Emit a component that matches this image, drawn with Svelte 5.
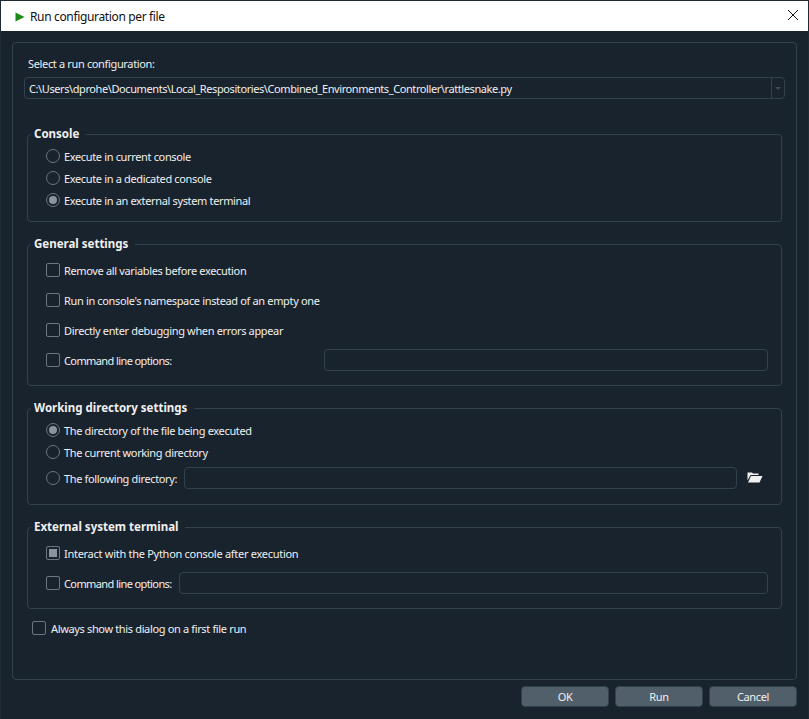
<script>
  let consoleRows = [
    { label: 'Execute in current console', on: false },
    { label: 'Execute in a dedicated console', on: false },
    { label: 'Execute in an external system terminal', on: true }
  ];
  let generalRows = [
    'Remove all variables before execution',
    "Run in console's namespace instead of an empty one",
    'Directly enter debugging when errors appear'
  ];
</script>

<div class="window">
  <header class="titlebar">
    <svg class="play" width="10" height="10" viewBox="0 0 10 10"><path d="M0.5 0.5 L9.5 5 L0.5 9.5 Z" fill="#1b8a16" /></svg>
    <span>Run configuration per file</span>
    <svg class="close" width="10" height="10" viewBox="0 0 10 10"><path d="M0 0 L10 10 M10 0 L0 10" stroke="#111" stroke-width="1" fill="none" /></svg>
  </header>

  <div class="content">
    <div class="frame">
      <div class="select-label">Select a run configuration:</div>
      <div class="combo">
        <span class="combo-text">C:\Users\dprohe\Documents\Local_Respositories\Combined_Environments_Controller\rattlesnake.py</span>
        <span class="combo-btn"><i class="arrow"></i></span>
      </div>

      <section class="group console">
        <h3>Console</h3>
        {#each consoleRows as row}
          <div class="row r22">
            <span class="radio" class:on={row.on}></span>
            <span>{row.label}</span>
          </div>
        {/each}
      </section>

      <section class="group general">
        <h3>General settings</h3>
        {#each generalRows as label}
          <div class="row r30">
            <span class="check"></span>
            <span>{label}</span>
          </div>
        {/each}
        <div class="row r30">
          <span class="check"></span>
          <span class="label-general">Command line options:</span>
          <div class="input"></div>
        </div>
      </section>

      <section class="group working">
        <h3>Working directory settings</h3>
        <div class="row r22">
          <span class="radio on"></span>
          <span>The directory of the file being executed</span>
        </div>
        <div class="row r22">
          <span class="radio"></span>
          <span>The current working directory</span>
        </div>
        <div class="row r30">
          <span class="radio"></span>
          <span class="label-dir">The following directory:</span>
          <div class="input dir"></div>
          <svg class="folder" width="16" height="11" viewBox="0 0 16 11">
            <path d="M0.5 0.5 H5 L6 1.5 H11.5 V3 H3.5 L0.5 8.5 Z M4 4 H15.5 L12.5 10.5 H1 Z" fill="#f0f0f0" />
          </svg>
        </div>
      </section>

      <section class="group external">
        <h3>External system terminal</h3>
        <div class="row r30">
          <span class="check on"></span>
          <span class="label-long">Interact with the Python console after execution</span>
        </div>
        <div class="row r30">
          <span class="check"></span>
          <span class="label-ext">Command line options:</span>
          <div class="input"></div>
        </div>
      </section>

      <div class="row always">
        <span class="check"></span>
        <span>Always show this dialog on a first file run</span>
      </div>
    </div>

    <footer class="buttons">
      <button>OK</button>
      <button>Run</button>
      <button>Cancel</button>
    </footer>
  </div>
</div>

<style>
  :global(body) {
    margin: 0;
    background: #19232d;
  }
  .window {
    width: 809px;
    height: 719px;
    box-sizing: border-box;
    border: 1px solid #1f2a33;
    border-bottom: 0;
    display: flex;
    flex-direction: column;
    font-family: "Noto Sans", "Open Sans", sans-serif;
    font-size: 11px;
    letter-spacing: -0.35px;
    white-space: nowrap;
    color: #f0f0f0;
    background: #19232d;
    overflow: hidden;
  }
  .titlebar {
    height: 30px;
    background: #fff;
    color: #111;
    display: flex;
    align-items: center;
    font-size: 12px;
    flex: none;
  }
  .play {
    margin-left: 14px;
    margin-right: 5px;
    margin-top: 2px;
  }
  .close {
    margin-left: auto;
    margin-right: 10px;
    margin-bottom: 2px;
  }
  .content {
    flex: 1;
    padding: 11px 11px 0 11px;
  }
  .frame {
    height: 638px;
    box-sizing: border-box;
    border: 1px solid #32414b;
    border-radius: 4px;
    padding: 0 11px;
  }
  .select-label {
    margin-top: 12px;
    margin-left: 4px;
    height: 17px;
    line-height: 17px;
  }
  .combo {
    margin-top: 5px;
    height: 22px;
    box-sizing: border-box;
    border: 1px solid #32414b;
    border-radius: 4px;
    display: flex;
    align-items: center;
    padding-left: 4px;
  }
  .combo-text {
    flex: 1;
    letter-spacing: -0.41px;
  }
  .combo-btn {
    width: 12px;
    height: 100%;
    border-left: 1px solid #32414b;
    display: flex;
    align-items: center;
    justify-content: center;
  }
  .arrow {
    width: 0;
    height: 0;
    border-left: 3px solid transparent;
    border-right: 3px solid transparent;
    border-top: 3px solid #3f4e58;
  }
  .group {
    position: relative;
    margin: 22px 3px 0 3px;
    border: 1px solid #32414b;
    border-radius: 4px;
    padding-left: 18px;
    padding-right: 13px;
    padding-top: 10px;
    box-sizing: border-box;
  }
  .console {
    margin-top: 35px;
    height: 88px;
  }
  .general {
    height: 142px;
  }
  .working {
    height: 97px;
  }
  .external {
    height: 82px;
  }
  h3 {
    position: absolute;
    top: -10px;
    left: 3px;
    margin: 0;
    padding: 0 7px 0 3px;
    background: #19232d;
    font-size: 11.5px;
    letter-spacing: 0;
    font-weight: 700;
    line-height: 17px;
  }
  .row {
    display: flex;
    align-items: center;
    gap: 4px;
  }
  .r22 {
    height: 22px;
  }
  .r30 {
    height: 30px;
  }
  .radio,
  .check {
    width: 14px;
    height: 14px;
    flex: none;
    box-sizing: border-box;
    border: 1px solid #6a7680;
    position: relative;
  }
  .radio {
    border-radius: 50%;
  }
  .check {
    border-radius: 2px;
  }
  .radio.on::after,
  .check.on::after {
    content: '';
    position: absolute;
    background: #8a949c;
    inset: 2px;
  }
  .radio.on::after {
    border-radius: 50%;
  }
  .input {
    height: 22px;
    box-sizing: border-box;
    border: 1px solid #32414b;
    border-radius: 4px;
    flex: 1;
  }
  .label-general {
    width: 256px;
    letter-spacing: -0.6px;
  }
  .label-dir {
    width: 116px;
  }
  .label-ext {
    width: 111px;
    letter-spacing: -0.6px;
  }
  .label-long {
    letter-spacing: -0.28px;
  }
  .dir {
    margin-right: 6px;
  }
  .folder {
    margin-right: 5px;
    margin-bottom: 2px;
  }
  .always {
    margin-top: 10px;
    margin-left: 8px;
    height: 18px;
    gap: 5px;
  }
  .buttons {
    display: flex;
    justify-content: flex-end;
    gap: 6px;
    margin-top: 6px;
  }
  button {
    width: 88px;
    height: 21px;
    box-sizing: border-box;
    background: #505f69;
    border: 1px solid #32414b;
    border-radius: 4px;
    color: #f0f0f0;
    font: inherit;
    letter-spacing: inherit;
    padding: 0;
  }
</style>
